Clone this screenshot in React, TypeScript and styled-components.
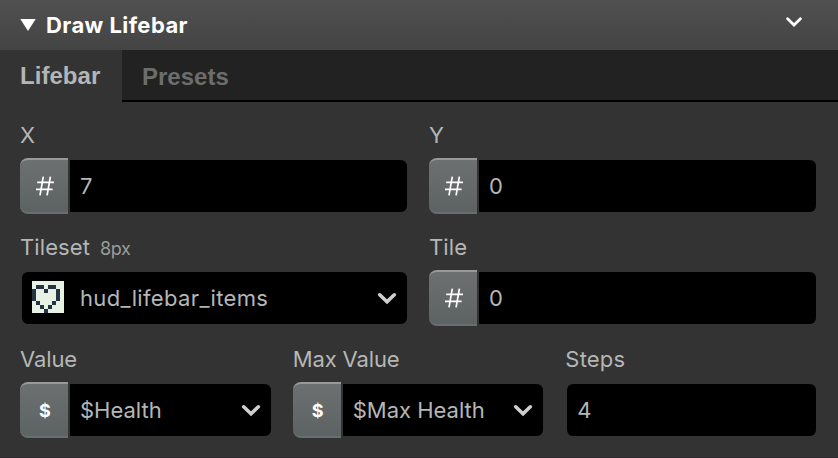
import React from "react";
import styled, { createGlobalStyle } from "styled-components";

const GlobalStyle = createGlobalStyle`
  * { box-sizing: border-box; }
  body {
    margin: 0;
    background: #333333;
    font-family: "Inter", sans-serif;
    -webkit-font-smoothing: antialiased;
  }
`;

const Panel = styled.section`
  width: 838px;
  height: 458px;
  overflow: hidden;
  background: #333333;
  border-bottom: 1px solid #2e2a2d;
`;

const Header = styled.header`
  display: flex;
  align-items: center;
  height: 50px;
  padding: 0 36px 0 20px;
  background: linear-gradient(#505050, #444444);
  color: #ffffff;
`;

const Title = styled.h1`
  flex: 1;
  margin: 0 0 0 10px;
  font-size: 22px;
  line-height: 50px;
  font-weight: 700;
  letter-spacing: 0.43px;
`;

const TabBar = styled.nav`
  display: flex;
  height: 52px;
`;

const Tab = styled.div<{ $active?: boolean }>`
  flex: ${(p) => (p.$active ? "0 0 122px" : "1")};
  padding: ${(p) => (p.$active ? "1px" : "2px")} 20px 0;
  border-bottom: 2px solid ${(p) => (p.$active ? "transparent" : "#000000")};
  background: ${(p) => (p.$active ? "#333333" : "#222222")};
  color: ${(p) => (p.$active ? "#b3b5b6" : "#6c6e6d")};
  font-family: "Liberation Sans", Arial, sans-serif;
  font-size: 24px;
  line-height: 50px;
  font-weight: 700;
  letter-spacing: ${(p) => (p.$active ? "0.05px" : "0px")};
`;

const Fields = styled.div`
  padding: 20px;
`;

const Row = styled.div<{ $columns: number }>`
  display: grid;
  grid-template-columns: repeat(${(p) => p.$columns}, 1fr);
  column-gap: 20px;
  margin-bottom: 20px;
`;

const Label = styled.div<{ $spacing?: number }>`
  height: 36px;
  font-size: 22px;
  line-height: 27px;
  color: #b5b7b6;
  letter-spacing: ${(p) => p.$spacing ?? 0}px;
  white-space: nowrap;
`;

const Hint = styled.span`
  margin-left: 10px;
  font-size: 18px;
  color: #9a9c9b;
  letter-spacing: -0.4px;
`;

const Control = styled.div`
  display: flex;
  height: 56px;
`;

const UnitButton = styled.div`
  flex: 0 0 48px;
  display: flex;
  align-items: center;
  justify-content: center;
  padding-left: 2px;
  border-top: 2px solid #999999;
  border-bottom: 2px solid #686e6e;
  border-radius: 8px 0 0 8px;
  background: linear-gradient(#6c7070, #5d6263);
  color: #ffffff;
  font-size: 18px;
  font-weight: 700;
`;

const Input = styled.div<{ $joined?: boolean }>`
  flex: 1;
  min-width: 0;
  display: flex;
  align-items: center;
  margin: 2px;
  padding: 0 10px;
  border-radius: ${(p) => (p.$joined ? "0 6px 6px 0" : "6px")};
  background: #000000;
`;

const Value = styled.span<{ $spacing?: number }>`
  flex: 1;
  font-size: 22px;
  line-height: 52px;
  color: #b5b7b6;
  letter-spacing: ${(p) => p.$spacing ?? 0}px;
  white-space: nowrap;
`;

const TileImage = styled.svg`
  flex: none;
  margin: -2px 16px 0 0;
`;

const Icon = styled.svg<{ $lift?: number }>`
  flex: none;
  display: block;
  margin-top: ${(p) => -(p.$lift ?? 0)}px;
`;

function HeartTile() {
  return (
    <TileImage width="32" height="32" viewBox="0 0 8 8" shapeRendering="crispEdges">
      <path d="M0 0h8v8H0z" fill="#e8f2e4" />
      <path
        d="M1 1h2v1H1zM4 1h2v1H4zM0 2h1v3H0zM3 2h1v1H3zM6 2h1v3H6zM1 5h1v1H1zM5 5h1v1H5zM2 6h1v1H2zM4 6h1v1H4zM3 7h1v1H3z"
        fill="#263442"
      />
    </TileImage>
  );
}

function HashIcon() {
  return (
    <Icon width="20" height="20" viewBox="0 0 20 20">
      <path
        d="M8.3 0.6 5 19.4M15.4 0.6 12.1 19.4M2.2 6.3H19M1 13.3H17.6"
        fill="none"
        stroke="#ffffff"
        strokeWidth="1.7"
      />
    </Icon>
  );
}

function SelectArrow() {
  return (
    <Icon width="20" height="14" viewBox="0 0 20 14">
      <path d="M2.7 3.8 10 10.8 17.3 3.8" fill="none" stroke="#cfcfcf" strokeWidth="3.6" strokeLinecap="round" />
    </Icon>
  );
}

interface FieldProps {
  label: string;
  labelSpacing?: number;
  hint?: string;
  unit?: "#" | "$";
  value: string;
  valueSpacing?: number;
  select?: boolean;
  tile?: boolean;
}

function Field({ label, labelSpacing, hint, unit, value, valueSpacing, select, tile }: FieldProps) {
  return (
    <div>
      <Label $spacing={labelSpacing}>
        {label}
        {hint && <Hint>{hint}</Hint>}
      </Label>
      <Control>
        {unit && <UnitButton>{unit === "#" ? <HashIcon /> : unit}</UnitButton>}
        <Input $joined={!!unit}>
          {tile && <HeartTile />}
          <Value $spacing={valueSpacing}>{value}</Value>
          {select && <SelectArrow />}
        </Input>
      </Control>
    </div>
  );
}

export default function App() {
  return (
    <>
      <GlobalStyle />
      <Panel>
        <Header>
          <Icon width="16" height="12" viewBox="0 0 16 12">
            <path d="M0.3 0H15.7L8 12Z" fill="#ffffff" />
          </Icon>
          <Title>Draw Lifebar</Title>
          <Icon width="16" height="12" viewBox="0 0 16 12" $lift={6}>
            <path d="M1.6 2.8 8 9 14.4 2.8" fill="none" stroke="#ffffff" strokeWidth="2.8" strokeLinecap="round" />
          </Icon>
        </Header>
        <TabBar>
          <Tab $active>Lifebar</Tab>
          <Tab>Presets</Tab>
        </TabBar>
        <Fields>
          <Row $columns={2}>
            <Field label="X" unit="#" value="7" />
            <Field label="Y" unit="#" value="0" />
          </Row>
          <Row $columns={2}>
            <Field label="Tileset" labelSpacing={0.1} hint="8px" value="hud_lifebar_items" valueSpacing={0.35} select tile />
            <Field label="Tile" labelSpacing={0.1} unit="#" value="0" />
          </Row>
          <Row $columns={3}>
            <Field label="Value" labelSpacing={-0.1} unit="$" value="$Health" select />
            <Field label="Max Value" labelSpacing={-0.12} unit="$" value="$Max Health" select />
            <Field label="Steps" labelSpacing={0.2} value="4" />
          </Row>
        </Fields>
      </Panel>
    </>
  );
}
